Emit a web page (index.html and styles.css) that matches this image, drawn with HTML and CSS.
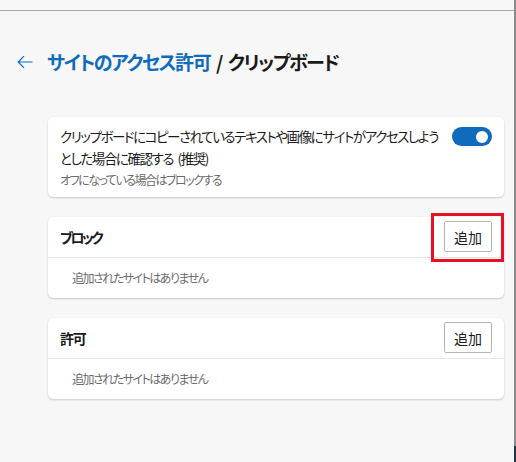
FILE: index.html
```html
<!DOCTYPE html>
<html lang="ja">
<head>
<meta charset="utf-8">
<link rel="stylesheet" href="styles.css">
</head>
<body>
<div class="app">
  <div class="main">
    <div class="topbar"></div>
    <header class="header">
      <svg class="back" width="16" height="14" viewBox="0 0 16 14"><path d="M15.5 7H1.2M7 1.2L1.2 7L7 12.8" fill="none" stroke="#0f6cbd" stroke-width="1.2"/></svg>
      <h1 class="title"><span class="crumb">サイトのアクセス許可</span> / クリップボード</h1>
    </header>
    <section class="card setting">
      <div class="setting-text">
        <div class="setting-label">クリップボードにコピーされているテキストや画像にサイトがアクセスしよう<br>とした場合に確認する (推奨)</div>
        <div class="setting-sub">オフになっている場合はブロックする</div>
      </div>
      <div class="toggle"><span class="knob"></span></div>
    </section>
    <section class="card list">
      <div class="list-head">
        <span class="list-title kana">ブロック</span>
        <button class="add">追加</button>
      </div>
      <div class="list-empty">追加されたサイトはありません</div>
      <div class="highlight"></div>
    </section>
    <section class="card list">
      <div class="list-head">
        <span class="list-title">許可</span>
        <button class="add">追加</button>
      </div>
      <div class="list-empty">追加されたサイトはありません</div>
    </section>
  </div>
  <div class="edge"></div>
</div>
</body>
</html>
```
FILE: styles.css
```css
html, body {
  margin: 0;
  padding: 0;
  background: #f7f7f7;
}
body {
  font-family: "Noto Sans CJK JP", "Noto Sans", sans-serif;
  color: #1b1b1b;
  font-feature-settings: "palt";
}
.app {
  display: flex;
  width: 516px;
  height: 462px;
  overflow: hidden;
}
.main {
  flex: 1;
}
.edge {
  width: 2px;
  background: linear-gradient(to bottom, #8a8a8a 0, #8a8a8a 446px, #1e3550 446px);
}
.topbar {
  height: 10px;
  border-bottom: 1px solid #a8a8a8;
}
.header {
  display: flex;
  align-items: center;
  height: 28px;
  padding: 37px 0 0 17px;
}
.back {
  display: block;
  margin-right: 14px;
}
.title {
  margin: 0;
  font-size: 19px;
  font-weight: 600;
  line-height: 28px;
  letter-spacing: -1.45px;
  word-spacing: 3px;
  color: #1b1b1b;
}
.crumb {
  color: #0f6cbd;
}
.card {
  position: relative;
  margin-left: 48px;
  width: 456px;
  background: #fff;
  border-radius: 5px;
  box-shadow: 0 1px 2px rgba(0, 0, 0, 0.18), 0 0 1px rgba(0, 0, 0, 0.08);
}
.setting {
  margin-top: 41px;
  display: flex;
  justify-content: space-between;
  padding: 8px 12px 7px 12px;
  box-sizing: border-box;
}
.setting-label {
  font-size: 13.5px;
  line-height: 22px;
  letter-spacing: -1.45px;
  word-spacing: 3px;
  white-space: nowrap;
}
.setting-sub {
  font-size: 12px;
  line-height: 20px;
  margin-top: 1px;
  color: #6b6b6b;
  letter-spacing: -1.5px;
}
.toggle {
  flex: none;
  width: 40px;
  height: 19px;
  margin-top: 2px;
  border-radius: 10px;
  background: #0f6cbd;
  display: flex;
  align-items: center;
  justify-content: flex-end;
  padding-right: 4px;
  box-sizing: border-box;
}
.knob {
  width: 12px;
  height: 12px;
  border-radius: 50%;
  background: #fff;
}
.list {
  margin-top: 20px;
}
.list-head {
  display: flex;
  align-items: center;
  justify-content: space-between;
  padding: 4px 12px 5px 12px;
  border-bottom: 1px solid #e5e5e5;
}
.list-title {
  font-size: 14px;
  font-weight: 600;
  letter-spacing: -1.2px;
}
.list-title.kana {
  letter-spacing: -2.6px;
}
.add {
  width: 48px;
  height: 31px;
  padding: 0;
  background: #fff;
  border: 1px solid #b5b5b5;
  border-radius: 2px;
  font-family: inherit;
  font-size: 14px;
  color: #1b1b1b;
}
.list-empty {
  height: 40px;
  line-height: 40px;
  padding-left: 24px;
  font-size: 12px;
  color: #6b6b6b;
  letter-spacing: -1.5px;
}
.highlight {
  position: absolute;
  left: 383px;
  top: -4px;
  width: 73px;
  height: 49px;
  box-sizing: border-box;
  border: 3px solid #e81123;
}
```
